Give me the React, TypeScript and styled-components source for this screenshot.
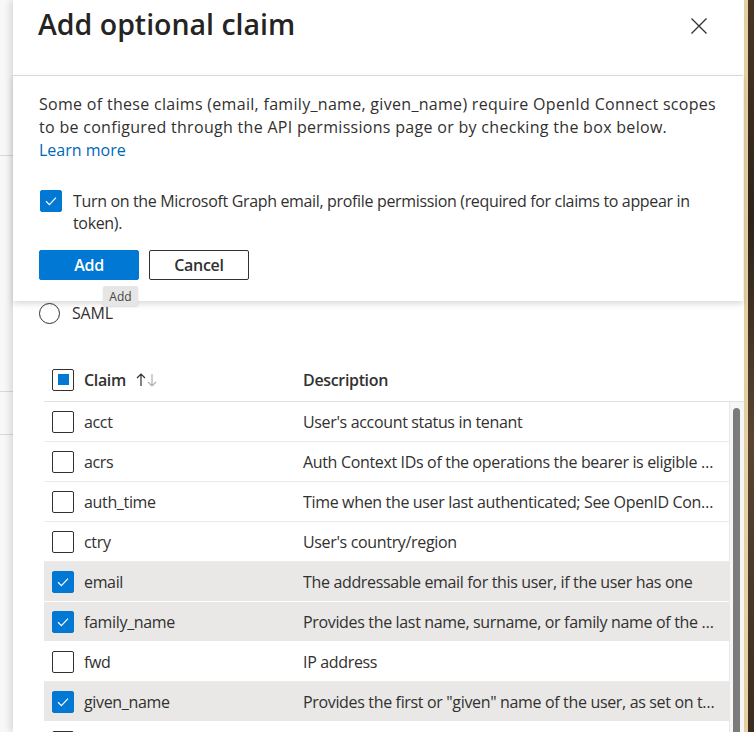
import React from "react";
import styled, { createGlobalStyle } from "styled-components";

const GlobalStyle = createGlobalStyle`
  html, body { margin: 0; padding: 0; }
  body {
    font-family: "Open Sans", "Noto Sans", sans-serif;
    color: #323130;
    background: #ffffff;
  }
  * { box-sizing: border-box; }
`;

const Page = styled.div`
  display: flex;
  width: 754px;
  height: 732px;
  overflow: hidden;
`;

const LeftStrip = styled.div`
  width: 13px;
  flex-shrink: 0;
  background: #f8f8f8;
  display: flex;
  flex-direction: column;
`;

const StripSegment = styled.div<{ $h: number }>`
  height: ${(p) => p.$h}px;
  border-bottom: 1px solid #d9d9d9;
`;

const Panel = styled.div`
  position: relative;
  flex: 1;
  min-width: 0;
  background: #ffffff;
  box-shadow: -3px 0 7px rgba(0, 0, 0, 0.13);
  display: flex;
  flex-direction: column;
  z-index: 1;
`;

const RightStrip = styled.div`
  width: 10px;
  flex-shrink: 0;
  display: flex;
`;

const TanEdge = styled.div`
  width: 4px;
  background: #e6d2a2;
`;

const Wallpaper = styled.div`
  flex: 1;
  background: linear-gradient(180deg, #4a3523 0%, #2e2218 30%, #5a4431 60%, #3b2c1f 100%);
`;

const Header = styled.div`
  height: 75px;
  flex-shrink: 0;
  display: flex;
  justify-content: space-between;
  align-items: flex-start;
  padding: 6px 37px 0 25px;
`;

const Title = styled.h1`
  margin: 0;
  font-size: 28.5px;
  font-weight: 600;
  line-height: 36px;
  color: #252423;
`;

const CloseButton = styled.button`
  margin-top: 12px;
  padding: 0;
  border: 0;
  background: transparent;
  width: 16px;
  height: 16px;
  display: flex;
`;

const Body = styled.div`
  flex: 1;
  min-height: 0;
  display: flex;
  flex-direction: column;
`;

const TokenSection = styled.div`
  padding: 227px 0 0 26px;
  display: flex;
  flex-direction: column;
`;

const RadioRow = styled.label`
  display: flex;
  align-items: center;
  gap: 12px;
  height: 22px;
  font-size: 16px;
  letter-spacing: -0.2px;
`;

const RadioCircle = styled.span`
  width: 21px;
  height: 21px;
  border-radius: 50%;
  border: 1px solid #323130;
  background: #fff;
`;

const Table = styled.div`
  margin: 34px 0 0 31px;
  flex: 1;
  min-height: 0;
  display: flex;
  flex-direction: column;
  letter-spacing: -0.34px;
`;

const HeaderRow = styled.div`
  height: 44px;
  flex-shrink: 0;
  display: flex;
  align-items: center;
  border-bottom: 1px solid #e4e2e0;
  font-size: 16px;
  font-weight: 600;
`;

const RowsArea = styled.div`
  flex: 1;
  min-height: 0;
  display: flex;
`;

const Rows = styled.div`
  flex: 1;
  min-width: 0;
  overflow: hidden;
`;

const Row = styled.div<{ $selected?: boolean }>`
  height: 40px;
  display: flex;
  align-items: center;
  border-bottom: 1px solid ${(p) => (p.$selected ? "#ffffff" : "#edebe9")};
  background: ${(p) => (p.$selected ? "#e9e8e6" : "#ffffff")};
  font-size: 16px;
`;

const CheckCell = styled.div`
  width: 40px;
  flex-shrink: 0;
  padding-left: 8px;
  display: flex;
  align-items: center;
`;

const ClaimCell = styled.div`
  width: 219px;
  flex-shrink: 0;
  display: flex;
  align-items: center;
  gap: 10px;
`;

const DescCell = styled.div`
  flex: 1;
  min-width: 0;
  padding-right: 12px;
  white-space: nowrap;
  overflow: hidden;
  text-overflow: ellipsis;
`;

const Box = styled.span<{ $checked?: boolean }>`
  width: 22px;
  height: 22px;
  border-radius: 2px;
  border: 1px solid ${(p) => (p.$checked ? "#0078d4" : "#323130")};
  background: ${(p) => (p.$checked ? "#0078d4" : "#ffffff")};
  display: flex;
  align-items: center;
  justify-content: center;
  flex-shrink: 0;
`;

const PartialMark = styled.span`
  width: 11px;
  height: 11px;
  background: #0078d4;
`;

const Scrollbar = styled.div`
  width: 15px;
  flex-shrink: 0;
  background: #f6f6f6;
  border-left: 1px solid #e8e8e8;
  padding: 6px 0 0 3px;
  display: flex;
`;

const Thumb = styled.div`
  width: 7px;
  flex: 0 0 7px;
  background: #7b7b7b;
  border-radius: 4px 4px 0 0;
`;

const Callout = styled.div`
  position: absolute;
  top: 75px;
  left: 0;
  right: 1px;
  height: 226px;
  background: #ffffff;
  border-top: 1px solid #d8d8d8;
  box-shadow: 0 3px 6px rgba(0, 0, 0, 0.14);
  padding: 17px 26px 0 26px;
  z-index: 2;
  display: flex;
  flex-direction: column;
`;

const Message = styled.p`
  margin: 0;
  font-size: 16px;
  line-height: 23px;
  letter-spacing: 0.3px;
`;

const LearnMore = styled.a`
  color: #0067b8;
  text-decoration: none;
  letter-spacing: 0;
`;

const ConsentRow = styled.label`
  margin-top: 28px;
  display: flex;
  align-items: flex-start;
  gap: 11px;
  padding-left: 1px;
  font-size: 16px;
  line-height: 22px;
  letter-spacing: -0.34px;
`;

const ButtonBar = styled.div`
  margin-top: 16px;
  display: flex;
  gap: 10px;
`;

const Button = styled.button<{ $primary?: boolean }>`
  width: 100px;
  height: 30px;
  border-radius: 2px;
  font-family: inherit;
  font-size: 16px;
  font-weight: 600;
  letter-spacing: -0.3px;
  padding: 0;
  border: 1px solid ${(p) => (p.$primary ? "#0078d4" : "#323130")};
  background: ${(p) => (p.$primary ? "#0078d4" : "#ffffff")};
  color: ${(p) => (p.$primary ? "#ffffff" : "#323130")};
`;

const Tooltip = styled.div`
  position: absolute;
  top: 286px;
  left: 90px;
  width: 35px;
  height: 20px;
  background: #e6e6e6;
  border-radius: 2px;
  box-shadow: 0 1px 2px rgba(0, 0, 0, 0.12);
  font-size: 12px;
  color: #444;
  display: flex;
  align-items: center;
  justify-content: center;
  z-index: 3;
`;

const Check = () => (
  <svg width="14" height="14" viewBox="0 0 14 14">
    <path d="M2 7.3 L5.4 10.6 L12 3.6" fill="none" stroke="#fff" strokeWidth="1.2" />
  </svg>
);

const SortArrows = () => (
  <svg width="22" height="16" viewBox="0 0 22 16">
    <path d="M5 14 V2 M1 6 L5 2 L9 6" fill="none" stroke="#323130" strokeWidth="1.2" />
    <path d="M16 2 V14 M12 10 L16 14 L20 10" fill="none" stroke="#b3b0ad" strokeWidth="1.2" />
  </svg>
);

type Claim = { name: string; desc: string; selected?: boolean };

const claims: Claim[] = [
  { name: "acct", desc: "User's account status in tenant" },
  { name: "acrs", desc: "Auth Context IDs of the operations the bearer is eligible to perform." },
  { name: "auth_time", desc: "Time when the user last authenticated; See OpenID Connect spec" },
  { name: "ctry", desc: "User's country/region" },
  { name: "email", desc: "The addressable email for this user, if the user has one", selected: true },
  {
    name: "family_name",
    desc: "Provides the last name, surname, or family name of the user as defined in the user object",
    selected: true,
  },
  { name: "fwd", desc: "IP address" },
  {
    name: "given_name",
    desc: 'Provides the first or "given" name of the user, as set on the user object',
    selected: true,
  },
  { name: "in_corp", desc: "Signals if the client is logging in from the corporate network" },
];

export default function App() {
  return (
    <Page>
      <GlobalStyle />
      <LeftStrip>
        <StripSegment $h={156} />
        <StripSegment $h={236} />
        <StripSegment $h={43} />
      </LeftStrip>
      <Panel>
        <Header>
          <Title>Add optional claim</Title>
          <CloseButton aria-label="Close">
            <svg width="16" height="16" viewBox="0 0 16 16">
              <path d="M0.5 0.5 L15.5 15.5 M15.5 0.5 L0.5 15.5" stroke="#323130" strokeWidth="1.3" />
            </svg>
          </CloseButton>
        </Header>
        <Body>
          <TokenSection>
            <RadioRow>
              <RadioCircle />
              SAML
            </RadioRow>
          </TokenSection>
          <Table>
            <HeaderRow>
              <CheckCell>
                <Box>
                  <PartialMark />
                </Box>
              </CheckCell>
              <ClaimCell>
                Claim
                <SortArrows />
              </ClaimCell>
              <DescCell>Description</DescCell>
            </HeaderRow>
            <RowsArea>
              <Rows>
                {claims.map((c) => (
                  <Row key={c.name} $selected={c.selected}>
                    <CheckCell>
                      <Box $checked={c.selected}>{c.selected && <Check />}</Box>
                    </CheckCell>
                    <ClaimCell>{c.name}</ClaimCell>
                    <DescCell>{c.desc}</DescCell>
                  </Row>
                ))}
              </Rows>
              <Scrollbar>
                <Thumb />
              </Scrollbar>
            </RowsArea>
          </Table>
        </Body>

        <Callout>
          <Message>
            Some of these claims (email, family_name, given_name) require OpenId Connect scopes
            <br />
            to be configured through the API permissions page or by checking the box below.
            <br />
            <LearnMore href="#">Learn more</LearnMore>
          </Message>
          <ConsentRow>
            <Box $checked>
              <Check />
            </Box>
            <span>
              Turn on the Microsoft Graph email, profile permission (required for claims to appear in
              <br />
              token).
            </span>
          </ConsentRow>
          <ButtonBar>
            <Button $primary>Add</Button>
            <Button>Cancel</Button>
          </ButtonBar>
        </Callout>
        <Tooltip>Add</Tooltip>
      </Panel>
      <RightStrip>
        <TanEdge />
        <Wallpaper />
      </RightStrip>
    </Page>
  );
}
